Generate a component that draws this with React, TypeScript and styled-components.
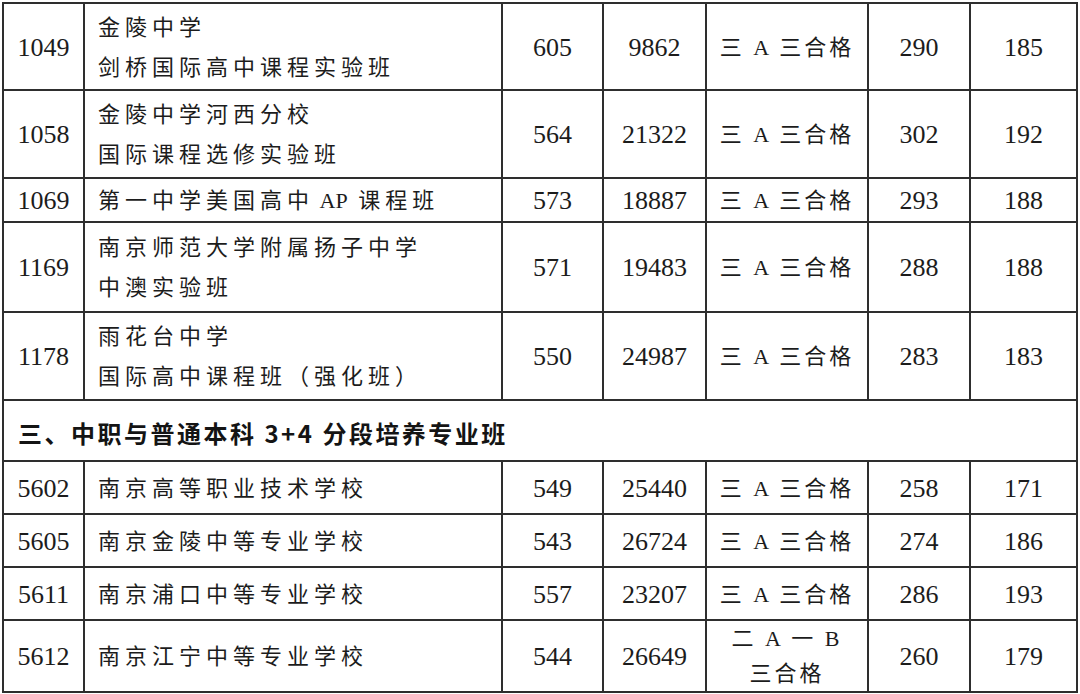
import React from 'react';
import styled, { createGlobalStyle } from 'styled-components';

const GlobalStyle = createGlobalStyle`
  html, body {
    margin: 0;
    padding: 0;
    background: #ffffff;
  }
  body {
    font-family: 'Liberation Serif', 'Noto Sans CJK SC', serif;
    color: #1c1c1c;
  }
`;

const Page = styled.div`
  width: 1080px;
  height: 694px;
  padding: 2px 0 0 2px;
  box-sizing: border-box;
  overflow: hidden;
`;

const Table = styled.table`
  width: 1076px;
  border-collapse: collapse;
  table-layout: fixed;
  border: 2px solid #2e2e2e;
`;

const Row = styled.tr<{ $h: number }>`
  height: ${(p) => p.$h}px;
`;

type CellKind = 'code' | 'name' | 'num' | 'grade';

const Cell = styled.td<{ $kind: CellKind; $tight?: boolean }>`
  border: 2px solid #2e2e2e;
  padding: 0;
  vertical-align: middle;
  font-family: 'Liberation Serif', 'Noto Sans CJK SC', serif;
  white-space: nowrap;
  overflow: hidden;

  ${(p) =>
    p.$kind === 'code' || p.$kind === 'num'
      ? `
    text-align: center;
    font-size: 26px;
    padding-top: 2px;
  `
      : ''}

  ${(p) =>
    p.$kind === 'name'
      ? `
    text-align: left;
    font-size: 22px;
    letter-spacing: 5px;
    line-height: 40px;
    padding: 2px 0 0 13px;
  `
      : ''}

  ${(p) =>
    p.$kind === 'grade'
      ? `
    text-align: center;
    font-size: 22px;
    letter-spacing: 3px;
    line-height: ${p.$tight ? 35 : 40}px;
    padding-top: ${p.$tight ? 0 : 2}px;
  `
      : ''}
`;

// latin words inside chinese text keep their natural spacing
const Latin = styled.span`
  letter-spacing: 0;
`;

const SectionCell = styled.td`
  border: 2px solid #2e2e2e;
  padding: 4px 0 0 14px;
  vertical-align: middle;
  font-family: 'Noto Sans CJK SC', 'Liberation Sans', sans-serif;
  font-size: 24px;
  font-weight: 700;
  letter-spacing: 2.5px;
  color: #141414;
  white-space: nowrap;
`;

const Line = styled.div``;

type Entry = {
  code: string;
  name: string[];
  min: string;
  rank: string;
  grade: string[];
  a: string;
  b: string;
  h: number;
};

const upper: Entry[] = [
  { code: '1049', name: ['金陵中学', '剑桥国际高中课程实验班'], min: '605', rank: '9862', grade: ['三 A 三合格'], a: '290', b: '185', h: 87 },
  { code: '1058', name: ['金陵中学河西分校', '国际课程选修实验班'], min: '564', rank: '21322', grade: ['三 A 三合格'], a: '302', b: '192', h: 88 },
  { code: '1069', name: ['第一中学美国高中 AP 课程班'], min: '573', rank: '18887', grade: ['三 A 三合格'], a: '293', b: '188', h: 44 },
  { code: '1169', name: ['南京师范大学附属扬子中学', '中澳实验班'], min: '571', rank: '19483', grade: ['三 A 三合格'], a: '288', b: '188', h: 90 },
  { code: '1178', name: ['雨花台中学', '国际高中课程班（强化班）'], min: '550', rank: '24987', grade: ['三 A 三合格'], a: '283', b: '183', h: 88 },
];

const lower: Entry[] = [
  { code: '5602', name: ['南京高等职业技术学校'], min: '549', rank: '25440', grade: ['三 A 三合格'], a: '258', b: '171', h: 53 },
  { code: '5605', name: ['南京金陵中等专业学校'], min: '543', rank: '26724', grade: ['三 A 三合格'], a: '274', b: '186', h: 53 },
  { code: '5611', name: ['南京浦口中等专业学校'], min: '557', rank: '23207', grade: ['三 A 三合格'], a: '286', b: '193', h: 53 },
  { code: '5612', name: ['南京江宁中等专业学校'], min: '544', rank: '26649', grade: ['二 A 一 B', '三合格'], a: '260', b: '179', h: 70 },
];

const widths = [81, 418, 101, 103, 162, 102, 107];

const renderName = (text: string) =>
  text.split(/( ?[A-Za-z]+)/).map((part, i) =>
    /[A-Za-z]/.test(part) ? <Latin key={i}>{part}</Latin> : part
  );

const EntryRow = ({ e }: { e: Entry }) => (
  <Row $h={e.h}>
    <Cell $kind="code">{e.code}</Cell>
    <Cell $kind="name">
      {e.name.map((n) => (
        <Line key={n}>{renderName(n)}</Line>
      ))}
    </Cell>
    <Cell $kind="num">{e.min}</Cell>
    <Cell $kind="num">{e.rank}</Cell>
    <Cell $kind="grade" $tight={e.grade.length > 1}>
      {e.grade.map((g) => (
        <Line key={g}>{g}</Line>
      ))}
    </Cell>
    <Cell $kind="num">{e.a}</Cell>
    <Cell $kind="num">{e.b}</Cell>
  </Row>
);

export default function App() {
  return (
    <>
      <GlobalStyle />
      <Page>
        <Table>
          <colgroup>
            {widths.map((w, i) => (
              <col key={i} style={{ width: w }} />
            ))}
          </colgroup>
          <tbody>
            {upper.map((e) => (
              <EntryRow key={e.code} e={e} />
            ))}
            <Row $h={61}>
              <SectionCell colSpan={7}>三、中职与普通本科 3+4 分段培养专业班</SectionCell>
            </Row>
            {lower.map((e) => (
              <EntryRow key={e.code} e={e} />
            ))}
          </tbody>
        </Table>
      </Page>
    </>
  );
}
